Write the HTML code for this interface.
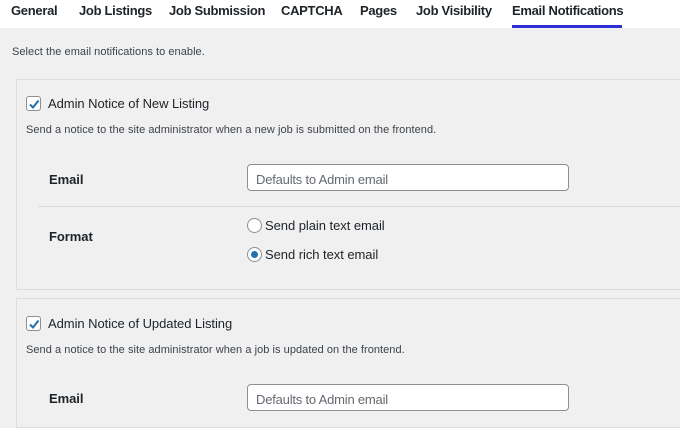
<!DOCTYPE html>
<html><head><style>
*{margin:0;padding:0;box-sizing:border-box}
body{width:680px;height:414px;overflow:hidden;background:#f0f0f1;font-family:"Liberation Sans",sans-serif;color:#1d2327;position:relative}
.a{position:absolute;white-space:nowrap;line-height:1}
.tabs{position:absolute;left:0;top:0;width:680px;height:28px;background:#fff}
.tab{position:absolute;top:4px;font-size:13px;font-weight:bold;color:#1d2327;letter-spacing:-0.3px}
.ul{position:absolute;left:512px;top:25px;width:110px;height:3px;background:#2f2fd6}
.box{position:absolute;left:16px;width:680px;border:1px solid #dcdcde;background:#f0f0f1}
.cb{position:absolute;width:15px;height:15px;border:1px solid #8c8f94;border-radius:3px;background:#fff}
.cb svg{position:absolute;left:0;top:0}
.inp{position:absolute;left:247px;width:322px;height:27px;border:1px solid #8c8f94;border-radius:4px;background:#fff;font-size:13px;color:#646970;padding:7px 8px;letter-spacing:-0.2px}
.rd{position:absolute;width:15px;height:15px;border:1px solid #8c8f94;border-radius:50%;background:#fff}
.s13{font-size:13px;letter-spacing:-0.05px}
.s11{font-size:11px;letter-spacing:0.05px;color:#3c434a}
.b{font-weight:bold}
</style></head><body>
<div class="tabs">
<span class="a tab" style="left:11px">General</span>
<span class="a tab" style="left:79px">Job Listings</span>
<span class="a tab" style="left:169px">Job Submission</span>
<span class="a tab" style="left:281px">CAPTCHA</span>
<span class="a tab" style="left:360px">Pages</span>
<span class="a tab" style="left:416px">Job Visibility</span>
<span class="a tab" style="left:512px">Email Notifications</span>
<div class="ul"></div>
</div>
<span class="a s11" style="left:12px;top:47px">Select the email notifications to enable.</span>

<div class="box" style="top:79px;height:211px"></div>
<div class="cb" style="left:26px;top:96px"><svg width="15" height="15" viewBox="0 0 15 15"><path d="M3 7.5 L6 10.5 L11.5 3.5" fill="none" stroke="#2271b1" stroke-width="2"/></svg></div>
<span class="a s13" style="left:48px;top:97px">Admin Notice of New Listing</span>
<span class="a s11" style="left:26px;top:125px">Send a notice to the site administrator when a new job is submitted on the frontend.</span>
<span class="a s13 b" style="left:49px;top:173px">Email</span>
<div class="inp" style="top:164px">Defaults to Admin email</div>
<div style="position:absolute;left:38px;top:206px;width:642px;height:1px;background:#dcdcde"></div>
<span class="a s13 b" style="left:49px;top:230px">Format</span>
<div class="rd" style="left:247px;top:218px"></div>
<span class="a s13" style="left:265px;top:219px">Send plain text email</span>
<div class="rd" style="left:247px;top:247px"><div style="position:absolute;left:3px;top:3px;width:7px;height:7px;border-radius:50%;background:#2271b1"></div></div>
<span class="a s13" style="left:265px;top:248px">Send rich text email</span>

<div class="box" style="top:298px;height:130px"></div>
<div class="cb" style="left:26px;top:316px"><svg width="15" height="15" viewBox="0 0 15 15"><path d="M3 7.5 L6 10.5 L11.5 3.5" fill="none" stroke="#2271b1" stroke-width="2"/></svg></div>
<span class="a s13" style="left:48px;top:317px">Admin Notice of Updated Listing</span>
<span class="a s11" style="left:26px;top:345px">Send a notice to the site administrator when a job is updated on the frontend.</span>
<span class="a s13 b" style="left:49px;top:392px">Email</span>
<div class="inp" style="top:384px">Defaults to Admin email</div>
</body></html>
